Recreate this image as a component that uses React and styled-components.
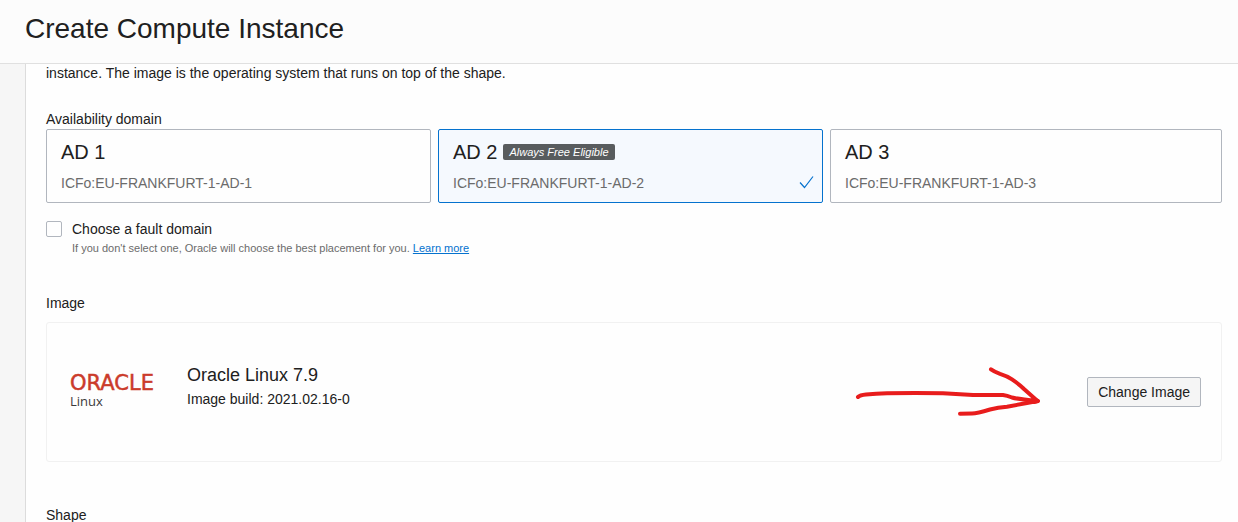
import React, { useState } from "react";
import styled, { createGlobalStyle } from "styled-components";

const GlobalStyle = createGlobalStyle`
  *, *::before, *::after { box-sizing: border-box; }
  body {
    margin: 0;
    background: #f6f6f6;
    color: #202020;
    font-family: "Liberation Sans", Arial, sans-serif;
    font-size: 14px;
    line-height: 20px;
  }
  h1, h2, h3, p, fieldset, legend { margin: 0; padding: 0; border: 0; font-weight: 400; }
`;

const Page = styled.div`
  display: flex;
  flex-direction: column;
  height: 100vh;
`;

const Header = styled.header`
  flex: none;
  padding: 13px 25px 18px;
  background: #fcfcfc;
  border-bottom: 1px solid #e0e0e0;
`;

const Title = styled.h1`
  font-size: 28px;
  line-height: 32px;
`;

const Main = styled.main`
  flex: 1;
  min-height: 0;
  overflow: hidden;
  margin-left: 25px;
  padding: 0 16px 0 20px;
  background: #fefefe;
  border-left: 1px solid #dcdcdc;
`;

const Intro = styled.p`
  margin-bottom: 27px;
  line-height: 18px;
`;

const Domains = styled.div`
  display: grid;
  grid-template-columns: repeat(3, 1fr);
`;

const DomainCell = styled.div`
  &:not(:last-child) { padding-right: 7px; }
`;

const DomainCard = styled.label`
  position: relative;
  display: flex;
  flex-direction: column;
  gap: 9px;
  padding: 10px 14px 9px;
  border: 1px solid ${(p) => (p.$selected ? "#0572ce" : "#b1b6be")};
  border-radius: 2px;
  background: ${(p) => (p.$selected ? "#f5f9fe" : "#fefefe")};
  cursor: pointer;
`;

const HiddenRadio = styled.input`
  position: absolute;
  inset: 0;
  width: 100%;
  height: 100%;
  margin: 0;
  opacity: 0;
`;

const DomainName = styled.span`
  display: flex;
  align-items: center;
  gap: 6px;
  font-size: 20px;
  line-height: 24px;
`;

const Badge = styled.span`
  padding: 0 6px;
  border-radius: 2px;
  background: #585c5e;
  color: #ffffff;
  font-size: 11px;
  font-style: italic;
  line-height: 16px;
`;

const DomainId = styled.span`
  color: #6b6b6b;
`;

const Tick = styled.svg`
  position: absolute;
  right: 8px;
  bottom: 13px;
`;

const FaultDomain = styled.div`
  display: grid;
  grid-template-columns: 16px 1fr;
  column-gap: 10px;
  align-items: center;
  margin: 16px 0 36px;
`;

const Checkbox = styled.input`
  appearance: none;
  width: 16px;
  height: 16px;
  margin: 0;
  border: 1px solid #b1b6be;
  border-radius: 2px;
  background: #fefefe;
  &:checked { background: #0572ce; }
`;

const Hint = styled.p`
  grid-column: 2;
  color: #6b6b6b;
  font-size: 11px;
  line-height: 18px;
`;

const Link = styled.a`
  color: #0572ce;
  text-underline-offset: 1px;
`;

const SectionTitle = styled.h2`
  font-size: 14px;
  line-height: 20px;
`;

const ImageCard = styled.div`
  display: flex;
  align-items: center;
  min-height: 140px;
  margin: 9px 0 43px;
  padding: 0 20px 0 23px;
  border: 1px solid #f1f1f1;
  border-radius: 3px;
`;

const Logo = styled.svg`
  flex: none;
  overflow: visible;
`;

const ImageInfo = styled.div`
  flex: 1;
  margin-left: 23px;
  padding-bottom: 14px;
`;

const ImageName = styled.h3`
  font-size: 18px;
  line-height: 28px;
`;

const Arrow = styled.svg`
  flex: none;
  margin-right: 45px;
`;

const Button = styled.button`
  height: 30px;
  padding: 0 10px;
  border: 1px solid #b1b6be;
  border-radius: 2px;
  background: #f5f5f5;
  color: inherit;
  font: inherit;
  cursor: pointer;
`;

const DOMAINS = [
  { name: "AD 1", id: "ICFo:EU-FRANKFURT-1-AD-1" },
  { name: "AD 2", id: "ICFo:EU-FRANKFURT-1-AD-2", free: true },
  { name: "AD 3", id: "ICFo:EU-FRANKFURT-1-AD-3" },
];

function OracleLinuxLogo() {
  return (
    <Logo width="94" height="40" viewBox="0 0 94 40" role="img" aria-label="Oracle Linux">
      <text x="0" y="18" fill="#cb3b2b" stroke="#cb3b2b" strokeWidth="0.5" fontFamily="DejaVu Sans, sans-serif" fontSize="21">
        ORACLE
      </text>
      <text x="0" y="34" fill="#3a3a3a" fontFamily="'Open Sans', sans-serif" fontSize="13">
        Linux
      </text>
    </Logo>
  );
}

function HandDrawnArrow() {
  return (
    <Arrow
      width="188"
      height="52"
      viewBox="0 0 188 52"
      fill="none"
      stroke="#e81c1c"
      strokeWidth="4"
      strokeLinecap="round"
      strokeLinejoin="round"
      aria-hidden="true"
    >
      <path d="M4 31Q6 29 12 28.500Q22 27.500 33 27.300Q62 26.500 89 27.300L119 29H149Q153 29.500 158 31.500Q163 33 183.500 35" />
      <path d="M137 3.300Q140 5.500 146 7.800Q153 10 158 13.300Q165 18 170 23L183.500 35" />
      <path d="M183.500 35Q168 38 153 40.700Q144 41.500 136 43.500Q123 47.500 118 47.500L106 47.800" />
      <path d="M179 33.500L184 35L180 36" />
    </Arrow>
  );
}

export default function App() {
  const [domain, setDomain] = useState("AD 2");
  return (
    <>
      <GlobalStyle />
      <Page>
        <Header>
          <Title>Create Compute Instance</Title>
        </Header>
        <Main>
          <Intro>instance. The image is the operating system that runs on top of the shape.</Intro>
          <fieldset>
            <legend>Availability domain</legend>
            <Domains>
              {DOMAINS.map((d) => (
                <DomainCell key={d.name}>
                  <DomainCard $selected={domain === d.name}>
                    <HiddenRadio
                      type="radio"
                      name="domain"
                      checked={domain === d.name}
                      onChange={() => setDomain(d.name)}
                    />
                    <DomainName>
                      {d.name}
                      {d.free && <Badge>Always Free Eligible</Badge>}
                    </DomainName>
                    <DomainId>{d.id}</DomainId>
                    {domain === d.name && (
                      <Tick width="15" height="14" viewBox="0 0 15 14" fill="none" stroke="#0572ce" aria-hidden="true">
                        <path d="M1 7.500L5.500 12.500L14 1.500" strokeWidth="1.200" />
                      </Tick>
                    )}
                  </DomainCard>
                </DomainCell>
              ))}
            </Domains>
          </fieldset>
          <FaultDomain>
            <Checkbox type="checkbox" id="fault-domain" />
            <label htmlFor="fault-domain">Choose a fault domain</label>
            <Hint>
              If you don't select one, Oracle will choose the best placement for you.{" "}
              <Link href="#learn-more">Learn more</Link>
            </Hint>
          </FaultDomain>
          <SectionTitle>Image</SectionTitle>
          <ImageCard>
            <OracleLinuxLogo />
            <ImageInfo>
              <ImageName>Oracle Linux 7.9</ImageName>
              <p>Image build: 2021.02.16-0</p>
            </ImageInfo>
            <HandDrawnArrow />
            <Button type="button">Change Image</Button>
          </ImageCard>
          <SectionTitle>Shape</SectionTitle>
        </Main>
      </Page>
    </>
  );
}
